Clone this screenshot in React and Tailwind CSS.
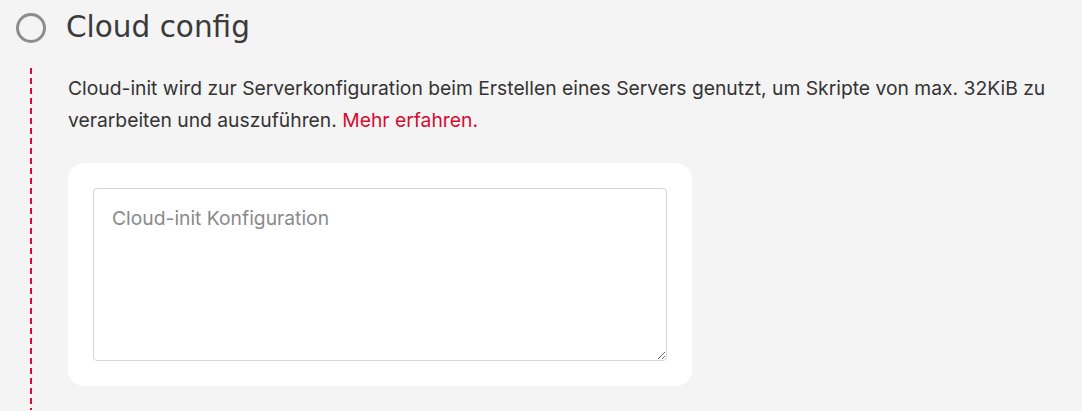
export default function App() {
    return (
        <div className="min-h-[411px] w-full bg-[#f4f4f4] font-['Inter',sans-serif] text-[#333333]">
            {/* Header */}
            <div className="flex h-[56px] items-center pl-[16px]">
                <span className="block h-[30px] w-[30px] rounded-full border-[3px] border-[#8c8c8c]" />
                <h2 className="ml-[20px] font-['DejaVu_Sans',sans-serif] text-[29.5px] font-normal leading-none text-[#3a3a3a]">
                    Cloud config
                </h2>
            </div>

            {/* Body with step line */}
            <div className="flex">
                <div className="flex w-[68px] shrink-0 pl-[30px] pt-[12px]">
                    <div className="w-[2px] bg-[repeating-linear-gradient(to_bottom,#dc0a3c_0_6px,transparent_6px_10px)]" />
                </div>
                <div className="flex-1 pb-[24px] pr-[16px] pt-[16px]">
                    <p className="text-[19.3px] leading-[32px]">
                        Cloud-init wird zur Serverkonfiguration beim Erstellen eines Servers genutzt, um Skripte von max. 32KiB zu verarbeiten und auszuführen.{' '}
                        <a href="#" className="text-[#d50c2f]">Mehr erfahren.</a>
                    </p>
                    <div className="mt-[27px] w-[624px] rounded-[16px] bg-white p-[25px]">
                        <textarea
                            placeholder="Cloud-init Konfiguration"
                            className="block h-[173px] w-full rounded-[4px] border border-[#d6d6d6] bg-white px-[18px] py-[15px] text-[19.3px] text-[#333333] outline-none placeholder:text-[#8a8a8a]"
                        />
                    </div>
                </div>
            </div>
        </div>
    );
}
